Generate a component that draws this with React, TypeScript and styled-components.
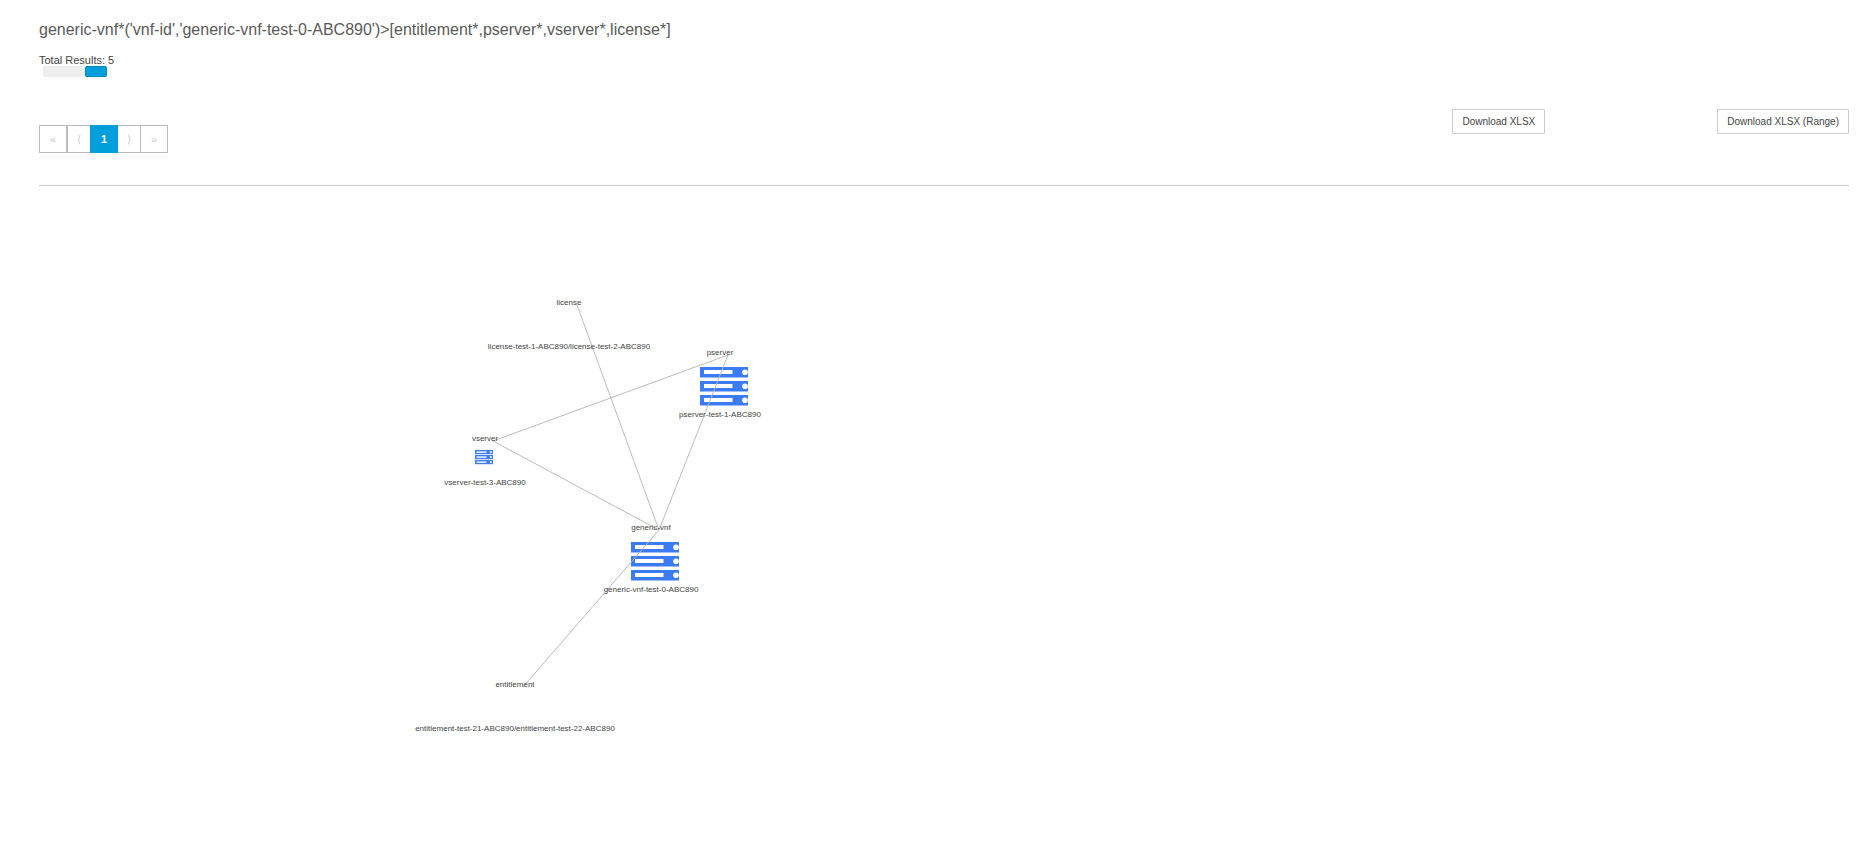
import styled, { createGlobalStyle } from "styled-components";

const GlobalStyle = createGlobalStyle`
  *, *::before, *::after { box-sizing: border-box; }
  body {
    margin: 0;
    background: #fff;
    color: #444;
    font-family: "Liberation Sans", Arial, sans-serif;
    font-size: 11px;
  }
`;

const Page = styled.main`
  padding: 20px 26px 0 39px;
`;

const Query = styled.h1`
  margin: 0;
  color: #5a5a5a;
  font-size: 16px;
  font-weight: 400;
  line-height: 20px;
`;

const Results = styled.section`
  display: flex;
  flex-direction: column;
  align-items: flex-start;
  margin-top: 14px;
`;

const Total = styled.span`
  line-height: 12px;
`;

const Toggle = styled.label`
  display: block;
  width: 64px;
  height: 11px;
  margin-left: 4px;
  border-radius: 2px;
  background: #eee;
  cursor: pointer;
`;

const ToggleInput = styled.input`
  display: block;
  appearance: none;
  width: 100%;
  height: 100%;
  margin: 0;
  cursor: pointer;

  &::before {
    content: "";
    display: block;
    width: 22px;
    height: 100%;
    border: 1px solid #0088c0;
    border-radius: 2px;
    background: #009fdb;
  }

  &:checked::before { margin-left: auto; }
`;

const Toolbar = styled.div`
  display: flex;
  align-items: flex-start;
  justify-content: space-between;
  margin-top: 32px;
  padding-bottom: 32px;
  border-bottom: 1px solid #ccc;
`;

const Pagination = styled.nav`
  display: flex;
  margin-top: 16px;
`;

const PageButton = styled.button<{ $active?: boolean; $wide?: boolean }>`
  z-index: ${(p) => (p.$active ? 1 : 0)};
  width: ${(p) => (p.$wide ? 28 : 24)}px;
  height: 28px;
  padding: 0;
  border: 1px solid ${(p) => (p.$active ? "#009fdb" : "#bbb")};
  background: ${(p) => (p.$active ? "#009fdb" : "#fff")};
  color: ${(p) => (p.$active ? "#fff" : "#ccc")};
  font-family: inherit;
  font-size: 11px;
  font-weight: ${(p) => (p.$active ? 700 : 400)};

  &:nth-child(n + 3) { margin-left: -1px; }
`;

const Downloads = styled.div`
  display: flex;
  gap: 172px;
`;

const DownloadButton = styled.button`
  height: 25px;
  padding: 0 9px;
  border: 1px solid #ccc;
  border-radius: 1px;
  background: #fff;
  color: #444;
  font-family: inherit;
  font-size: 10px;
`;

const Graph = styled.svg`
  display: block;
  width: 100%;
  height: 600px;
  overflow: visible;
`;

const Edge = styled.line`
  stroke: #bbb;
  stroke-width: 1px;
`;

const NodeLabel = styled.text`
  fill: #444;
  font-family: "Liberation Sans", Arial, sans-serif;
  font-size: 8px;
  text-anchor: middle;
`;

type GraphNode = {
  type: string;
  name: string;
  x: number;
  y: number;
  nameOffset: number;
  icon?: "large" | "small";
};

const nodes: Record<string, GraphNode> = {
  license: { type: "license", name: "license-test-1-ABC890/license-test-2-ABC890", x: 530, y: 119, nameOffset: 44 },
  pserver: { type: "pserver", name: "pserver-test-1-ABC890", x: 681, y: 169, nameOffset: 62, icon: "large" },
  vserver: { type: "vserver", name: "vserver-test-3-ABC890", x: 446, y: 255, nameOffset: 44, icon: "small" },
  vnf: { type: "generic-vnf", name: "generic-vnf-test-0-ABC890", x: 612, y: 344, nameOffset: 62, icon: "large" },
  entitlement: { type: "entitlement", name: "entitlement-test-21-ABC890/entitlement-test-22-ABC890", x: 476, y: 501, nameOffset: 44 },
};

const edges = [
  ["license", "vnf"],
  ["pserver", "vserver"],
  ["pserver", "vnf"],
  ["vserver", "vnf"],
  ["vnf", "entitlement"],
];

function LargeServer({ x, y }: { x: number; y: number }) {
  return (
    <g transform={`translate(${x} ${y})`}>
      {[0, 14, 28].map((top) => (
        <g key={top}>
          <rect y={top} width="48" height="10.5" fill="#3b7cf4" />
          <rect x="4" y={top + 3} width="28.5" height="4" fill="#fff" />
          <circle cx="45" cy={top + 5.2} r="2.8" fill="#fff" />
        </g>
      ))}
    </g>
  );
}

function SmallServer({ x, y }: { x: number; y: number }) {
  return (
    <g transform={`translate(${x} ${y})`}>
      {[0, 5, 10].map((top) => (
        <g key={top}>
          <rect y={top} width="18" height="4.2" fill="#3b7cf4" />
          <rect x="1.5" y={top + 1.4} width="10" height="1.4" fill="#fff" />
          <circle cx="15.8" cy={top + 2.1} r="1.1" fill="#fff" />
        </g>
      ))}
    </g>
  );
}

export default function App() {
  return (
    <>
      <GlobalStyle />
      <Page>
        <Query>generic-vnf*('vnf-id','generic-vnf-test-0-ABC890')&gt;[entitlement*,pserver*,vserver*,license*]</Query>
        <Results>
          <Total>Total Results: 5</Total>
          <Toggle>
            <ToggleInput type="checkbox" role="switch" aria-label="Graph view" defaultChecked />
          </Toggle>
        </Results>
        <Toolbar>
          <Pagination aria-label="Result pages">
            <PageButton $wide aria-label="First page">«</PageButton>
            <PageButton aria-label="Previous page">⟨</PageButton>
            <PageButton $wide $active aria-current="page">1</PageButton>
            <PageButton aria-label="Next page">⟩</PageButton>
            <PageButton $wide aria-label="Last page">»</PageButton>
          </Pagination>
          <Downloads>
            <DownloadButton>Download XLSX</DownloadButton>
            <DownloadButton>Download XLSX (Range)</DownloadButton>
          </Downloads>
        </Toolbar>
        <Graph role="img" aria-label="Relationships between the query results">
          {Object.values(nodes).map((n) => (
            <g key={n.type}>
              {n.icon === "large" && <LargeServer x={n.x - 20} y={n.y + 12} />}
              {n.icon === "small" && <SmallServer x={n.x - 10} y={n.y + 9} />}
            </g>
          ))}
          {edges.map(([from, to]) => (
            <Edge key={from + to} x1={nodes[from].x + 8} y1={nodes[from].y} x2={nodes[to].x + 8} y2={nodes[to].y} />
          ))}
          {Object.values(nodes).map((n) => (
            <g key={n.type}>
              <NodeLabel x={n.x} y={n.y}>{n.type}</NodeLabel>
              <NodeLabel x={n.x} y={n.y + n.nameOffset}>{n.name}</NodeLabel>
            </g>
          ))}
        </Graph>
      </Page>
    </>
  );
}
